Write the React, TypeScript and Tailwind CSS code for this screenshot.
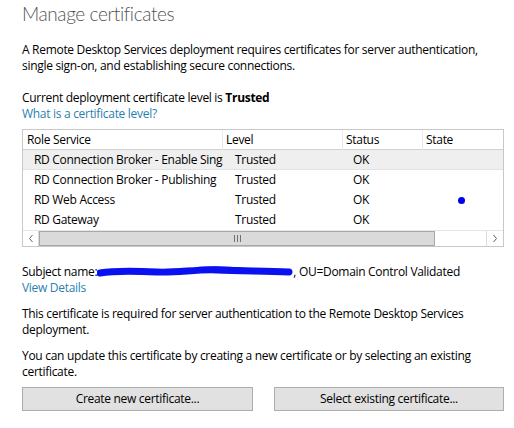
import React from 'react';

const rows = [
  { role: 'RD Connection Broker - Enable Single Sign On', level: 'Trusted', status: 'OK', dot: false, selected: true },
  { role: 'RD Connection Broker - Publishing', level: 'Trusted', status: 'OK', dot: false, selected: false },
  { role: 'RD Web Access', level: 'Trusted', status: 'OK', dot: true, selected: false },
  { role: 'RD Gateway', level: 'Trusted', status: 'OK', dot: false, selected: false },
];

function Scrollbar() {
  return (
    <div className="flex h-[16px] border-t border-[#e6e6e6]">
      <div className="flex w-[16px] items-center justify-center border-r border-[#dcdcdc] bg-white">
        <svg width="6" height="9" viewBox="0 0 6 9">
          <path d="M4.5 1 L1.5 4.5 L4.5 8" fill="none" stroke="#606060" strokeWidth="1" />
        </svg>
      </div>
      <div className="flex w-[396px] items-center justify-center border border-[#a8a8a8] bg-[#dadada]">
        <svg width="7" height="7" viewBox="0 0 7 7">
          <path d="M0.5 0 V7 M3.5 0 V7 M6.5 0 V7" stroke="#707070" strokeWidth="1" />
        </svg>
      </div>
      <div className="flex-1 bg-white" />
      <div className="flex w-[17px] items-center justify-center border-l border-[#dcdcdc] bg-white">
        <svg width="6" height="9" viewBox="0 0 6 9">
          <path d="M1.5 1 L4.5 4.5 L1.5 8" fill="none" stroke="#606060" strokeWidth="1" />
        </svg>
      </div>
    </div>
  );
}

function CertTable() {
  return (
    <div className="mt-[7px] w-[482px] border border-[#c8c8c8] bg-white">
      <div className="flex h-[20px] items-center border-b border-[#d0d0d0] text-black">
        <div className="w-[200px] border-r border-[#e8e8e8] pl-[4px] leading-[20px]">Role Service</div>
        <div className="w-[120px] border-r border-[#e8e8e8] pl-[3px] leading-[20px]">Level</div>
        <div className="w-[80px] border-r border-[#e8e8e8] pl-[3px] leading-[20px]">Status</div>
        <div className="flex-1 pl-[3px] leading-[20px]">State</div>
      </div>
      {rows.map((r) => (
        <div
          key={r.role}
          className={`flex h-[20px] items-center ${r.selected ? 'border-b border-[#e2e2e2] bg-[#efefef]' : ''}`}
        >
          <div className="w-[200px] overflow-hidden whitespace-nowrap pl-[11px]">{r.role}</div>
          <div className="w-[120px] pl-[12px]">{r.level}</div>
          <div className="w-[80px] pl-[10px]">{r.status}</div>
          <div className="flex flex-1 justify-center pr-[4px]">
            {r.dot && <span className="block h-[7px] w-[7px] rounded-full bg-[#0000ee]" />}
          </div>
        </div>
      ))}
      <Scrollbar />
    </div>
  );
}

export default function App() {
  return (
    <div
      className="h-[428px] w-[514px] bg-white pl-[22px] text-[12px] leading-[16px] tracking-[-0.3px] text-black"
      style={{ fontFamily: '"Open Sans", "Noto Sans", sans-serif' }}
    >
      <h1
        className="h-[28px] pt-[1px] text-[19px] font-light leading-[26px] tracking-[-0.4px] text-[#555555]"
        style={{ fontFamily: 'Lato, "Open Sans", sans-serif' }}
      >
        Manage certificates
      </h1>

      <p className="mt-[14px] whitespace-nowrap">
        A Remote Desktop Services deployment requires certificates for server authentication,
        <br />
        single sign-on, and establishing secure connections.
      </p>

      <p className="mt-[16px]">
        Current deployment certificate level is <span className="font-bold">Trusted</span>
      </p>
      <a className="block text-[#2a7fb0]">What is a certificate level?</a>

      <CertTable />

      <div className="mt-[17px] flex items-center whitespace-nowrap">
        <span>Subject name:</span>
        <svg width="196" height="16" viewBox="0 0 196 16">
          <path
            d="M3 9 C20 6 40 7 60 8 C80 9 100 5 120 6 C140 7 160 7 192 8"
            fill="none"
            stroke="#0a10f0"
            strokeWidth="7"
            strokeLinecap="round"
          />
          <path d="M100 5 C120 3 140 5 150 6" fill="none" stroke="#0a10f0" strokeWidth="4" strokeLinecap="round" />
        </svg>
        <span>, OU=Domain Control Validated</span>
      </div>
      <a className="block text-[#2a7fb0]">View Details</a>

      <p className="mt-[10px] whitespace-nowrap">
        This certificate is required for server authentication to the Remote Desktop Services
        <br />
        deployment.
      </p>

      <p className="mt-[10px] whitespace-nowrap">
        You can update this certificate by creating a new certificate or by selecting an existing
        <br />
        certificate.
      </p>

      <div className="mt-[7px] flex w-[482px] gap-[21px]">
        <button className="h-[24px] w-[231px] border border-[#adadad] bg-[#e1e1e1] text-center leading-[22px]">
          Create new certificate...
        </button>
        <button className="h-[24px] w-[230px] border border-[#adadad] bg-[#e1e1e1] text-center leading-[22px]">
          Select existing certificate...
        </button>
      </div>
    </div>
  );
}
